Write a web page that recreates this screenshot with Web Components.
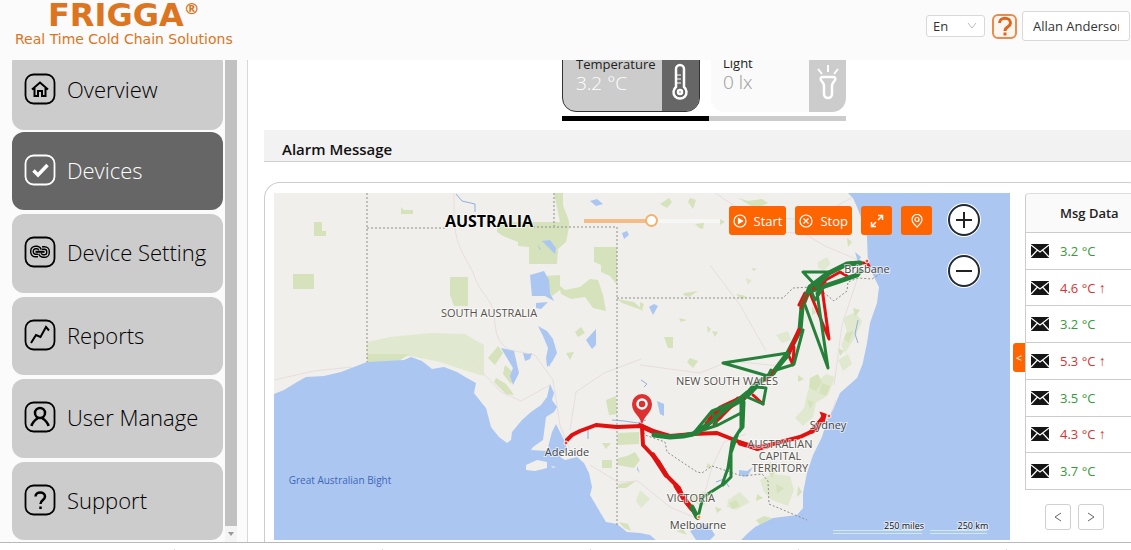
<!DOCTYPE html>
<html lang="en">
<head>
<meta charset="utf-8">
<title>Frigga - Devices</title>
<style>
  body {
    margin: 0;
    height: 100vh;
    overflow: hidden;
    font-family: "Open Sans", "Noto Sans", sans-serif;
    font-size: 13px;
    color: #222;
    background: #fff;
  }
</style>
</head>
<body>
<fr-app>
  <fr-header slot="header"></fr-header>
  <fr-sidebar slot="side">
    <fr-nav-item icon="home">Overview</fr-nav-item>
    <fr-nav-item icon="check" active>Devices</fr-nav-item>
    <fr-nav-item icon="link">Device Setting</fr-nav-item>
    <fr-nav-item icon="chart">Reports</fr-nav-item>
    <fr-nav-item icon="user">User Manage</fr-nav-item>
    <fr-nav-item icon="help">Support</fr-nav-item>
  </fr-sidebar>
  <fr-sensors>
    <fr-sensor icon="thermo" selected>Temperature<span slot="value">3.2 °C</span></fr-sensor>
    <fr-sensor icon="torch">Light<span slot="value">0 lx</span></fr-sensor>
  </fr-sensors>
  <fr-section-title>Alarm Message</fr-section-title>
  <fr-panel>
    <fr-map></fr-map>
    <fr-messages slot="list"></fr-messages>
  </fr-panel>
</fr-app>

<script>
const NAV_ICONS = {
  home: '<path d="M7 15.500 15 8.500l8 7M9.500 14v8h3.500v-5h4v5h3.500v-8" stroke-width="2"/>',
  check: '<path d="M8.500 15.500l4.500 4.500 9.500-10" stroke-width="3.500" stroke-linecap="butt"/>',
  link: '<path d="M13 18.500h-2.500a3.500 3.500 0 0 1-3.500-3.500v-1a3.500 3.500 0 0 1 3.500-3.500h1.500a3.500 3.500 0 0 1 3 2.500M17 11h2.500a3.500 3.500 0 0 1 3.500 3.500v1a3.500 3.500 0 0 1-3.500 3.500h-1.500a3.500 3.500 0 0 1-3-2.500" stroke-width="4"/><path class="in" d="M13 18.500h-2.500a3.500 3.500 0 0 1-3.500-3.500v-1a3.500 3.500 0 0 1 3.500-3.500h1.500a3.500 3.500 0 0 1 3 2.500M17 11h2.500a3.500 3.500 0 0 1 3.500 3.500v1a3.500 3.500 0 0 1-3.500 3.500h-1.500a3.500 3.500 0 0 1-3-2.500" stroke-width="1.200"/><path d="M10.500 14.800h9" stroke-width="2"/>',
  chart: '<path d="M6 23l5-8 4.500 2 5.500-10 3 3.500" stroke-width="2"/>',
  user: '<circle cx="15" cy="11" r="5" stroke-width="2.500"/><path d="M6.500 24c1-4.500 4.500-6.500 6.500-8M23.500 24c-1-4.500-4.500-6.500-6.500-8" stroke-width="2.500"/>',
  help: '<path d="M10.500 11.500c0-5.500 9.500-5.500 9.500 0 0 3.500-4.500 3.500-4.500 7.500M15.500 21.500v2.500" stroke-width="2.500" stroke-linecap="butt"/>'
};

const SENSOR_ICONS = {
  thermo: '<path d="M9 25V7a4 4 0 0 1 8 0v18a6.500 6.500 0 1 1-8 0z"/><circle cx="13" cy="30" r="2"/><path d="M10 13h4M10 17h4M10 21h4" stroke-width="1"/>',
  torch: '<path d="M8 14h12a2 2 0 0 1 1 3c-1 2-3 3-3 6v8a4 4 0 0 1-8 0v-8c0-3-2-4-3-6a2 2 0 0 1 1-3z"/><path d="M14 2v7M4 6l4 5M24 6l-4 5" stroke-width="2"/>'
};

class FrApp extends HTMLElement {
  constructor() {
    super();
    this.attachShadow({ mode: 'open' });
    this.shadowRoot.innerHTML = `
      <style>
        :host {
          display: flex;
          flex-direction: column;
          height: 100vh;
        }
        #body {
          flex: 1;
          min-height: 0;
          display: flex;
        }
        /* the page is scrolled a little, so main starts in the middle of the sensor cards */
        main {
          flex: 1;
          min-width: 0;
          overflow: hidden;
          padding-left: 16px;
          display: flex;
          flex-direction: column;
        }
        #inner {
          flex: 1;
          min-height: 0;
          margin-right: -13px;
          display: flex;
          flex-direction: column;
        }
        footer {
          height: 8px;
          box-sizing: border-box;
          border-top: 1px solid #b9b9bd;
          background: repeating-linear-gradient(90deg, transparent 0 174px, #d8d8d8 174px 175px, transparent 175px 208px) 0 6px no-repeat #fff;
        }
      </style>
      <slot name="header"></slot>
      <div id="body">
        <slot name="side"></slot>
        <main><div id="inner"><slot></slot></div></main>
      </div>
      <footer></footer>
    `;
  }
}

class FrHeader extends HTMLElement {
  constructor() {
    super();
    this.attachShadow({ mode: 'open' });
    this.shadowRoot.innerHTML = `
      <style>
        :host {
          display: flex;
          justify-content: space-between;
          align-items: flex-start;
          height: 60px;
          flex: none;
          overflow: hidden;
          background: #fbfbfb;
        }
        #logo {
          padding-left: 15px;
          color: #dd7420;
          text-align: center;
          text-decoration: none;
          font-family: "DejaVu Sans", sans-serif;
        }
        #logo strong {
          display: block;
          font-size: 32px;
          line-height: 30px;
        }
        #logo sup {
          font-size: 16px;
          line-height: 0;
        }
        #logo span {
          display: block;
          font-size: 14px;
          line-height: 18px;
        }
        form {
          display: flex;
          align-items: center;
          gap: 5px;
          padding: 11px 1px 0 0;
        }
        label {
          position: relative;
          display: flex;
        }
        select, input {
          box-sizing: border-box;
          font: inherit;
          color: #333;
          background: #fff;
          border: 1px solid #d9d9d9;
          border-radius: 3px;
        }
        select {
          appearance: none;
          width: 59px;
          height: 22px;
          padding: 0 6px;
        }
        label svg {
          position: absolute;
          right: 8px;
          top: 7px;
        }
        button {
          width: 25px;
          height: 25px;
          margin-left: 2px;
          padding: 0;
          border: 2px solid #ec8a4c;
          border-radius: 6px;
          background: #fdf6f0;
        }
        button svg { display: block; margin: auto; }
        input {
          width: 108px;
          height: 30px;
          padding: 0 10px;
        }
      </style>
      <a id="logo" href="#"><strong>FRIGGA<sup>®</sup></strong><span>Real Time Cold Chain Solutions</span></a>
      <form>
        <label>
          <select aria-label="Language"><option>En</option></select>
          <svg width="10" height="8" fill="none" stroke="#bbb"><path d="M1 1l4 5 4-5"/></svg>
        </label>
        <button type="button" aria-label="Help">
          <svg width="16" height="20" fill="none" stroke="#e0651c" stroke-width="3"><path d="M2.500 7c0-6.500 11-6.500 11 0 0 4-5.500 3.500-5.500 8M8 16.500v3"/></svg>
        </button>
        <input aria-label="User" value="Allan Anderson">
      </form>
    `;
  }
}

class FrSidebar extends HTMLElement {
  constructor() {
    super();
    this.attachShadow({ mode: 'open' });
    this.shadowRoot.innerHTML = `
      <style>
        :host {
          box-sizing: border-box;
          flex: none;
          width: 248px;
          display: flex;
          overflow: hidden;
          padding: 0 10px 0 12px;
          gap: 2px;
          background: #fbfbfb;
          border-right: 1px solid #d8d8d8;
        }
        nav {
          flex: 1;
          display: flex;
          flex-direction: column;
          gap: 4px;
          padding-bottom: 2px;
        }
        ::slotted(:first-child) { margin: -9px 0 -2px; }
        #bar {
          width: 12px;
          display: flex;
          flex-direction: column;
          background: #f4f4f4;
        }
        #thumb { flex: 1; background: #c1c1c1; }
        svg { display: block; margin: 5px auto; }
      </style>
      <nav><slot></slot></nav>
      <div id="bar">
        <div id="thumb"></div>
        <svg width="8" height="6" fill="#999"><path d="M1 1h6L4 5z"/></svg>
      </div>
    `;
  }
}

class FrNavItem extends HTMLElement {
  constructor() {
    super();
    this.attachShadow({ mode: 'open' });
    this.shadowRoot.innerHTML = `
      <style>
        :host {
          --ink: #000;
          --card: #ccc;
          flex: 1;
          display: flex;
        }
        :host([active]) {
          --ink: #fff;
          --card: #666;
        }
        a {
          flex: 1;
          display: flex;
          align-items: center;
          gap: 11px;
          padding: 0 0 2px 12px;
          border-radius: 12px;
          background: var(--card);
          color: var(--ink);
          text-decoration: none;
          font-size: 22px;
          font-weight: 300;
          line-height: 30px;
          white-space: nowrap;
        }
        svg { flex: none; stroke: var(--ink); fill: none; }
        .in { stroke: var(--card); }
      </style>
      <a href="#">
        <svg width="32" height="32" viewBox="-1 -1 32 32">
          <rect width="29" height="29" x=".5" y=".5" rx="8" stroke-width="1.800"/>${NAV_ICONS[this.getAttribute('icon')]}
        </svg>
        <slot></slot>
      </a>
    `;
  }
}

class FrSensors extends HTMLElement {
  constructor() {
    super();
    this.attachShadow({ mode: 'open' });
    this.shadowRoot.innerHTML = `
      <style>
        :host {
          flex: none;
          align-self: center;
          margin: -28px 0 9px;
          width: 284px;
        }
        #cards { display: flex; gap: 11px; }
        #bar {
          height: 5px;
          margin-top: 4px;
          background: linear-gradient(90deg, #000 147px, #ccc 147px);
        }
      </style>
      <div id="cards"><slot></slot></div>
      <div id="bar"></div>
    `;
  }
}

class FrSensor extends HTMLElement {
  constructor() {
    super();
    this.attachShadow({ mode: 'open' });
    this.shadowRoot.innerHTML = `
      <style>
        :host {
          box-sizing: border-box;
          width: 135px;
          height: 80px;
          display: flex;
          overflow: hidden;
          border-radius: 14px;
          background: #fafafa;
          --side: #ccc;
        }
        :host([selected]) {
          width: 138px;
          border: 1px solid #333;
          background: #ccc;
          --side: #666;
        }
        #text {
          flex: 1;
          display: flex;
          flex-direction: column;
          padding: 22px 0 0 12px;
          line-height: 18px;
        }
        ::slotted(span) {
          display: block;
          font-size: 19px;
          line-height: 20px;
          font-weight: 300;
          color: #999;
        }
        :host([selected]) ::slotted(span) { color: #fff; }
        #icon {
          width: 37px;
          display: flex;
          justify-content: center;
          align-items: flex-end;
          padding-bottom: 9px;
          box-sizing: border-box;
          background: var(--side);
        }
        :host([selected]) #text { padding-left: 13px; }
      </style>
      <div id="text"><div><slot></slot></div><slot name="value"></slot></div>
      <div id="icon">
        <svg width="28" height="40" viewBox="0 0 28 40" fill="none" stroke="#fff" stroke-width="2.500">${SENSOR_ICONS[this.getAttribute('icon')]}</svg>
      </div>
    `;
  }
}

class FrSectionTitle extends HTMLElement {
  constructor() {
    super();
    this.attachShadow({ mode: 'open' });
    this.shadowRoot.innerHTML = `
      <style>
        :host {
          display: block;
          flex: none;
          background: #f2f2f2;
          border-bottom: 1px solid #d0d0d0;
        }
        h2 {
          margin: 0;
          padding: 7px 18px 0;
          font-size: 15px;
          line-height: 24px;
          font-weight: 600;
          color: #111;
        }
      </style>
      <h2><slot></slot></h2>
    `;
  }
}

class FrPanel extends HTMLElement {
  constructor() {
    super();
    this.attachShadow({ mode: 'open' });
    this.shadowRoot.innerHTML = `
      <style>
        :host {
          flex: 1;
          min-height: 0;
          display: flex;
          margin-top: 20px;
          padding: 10px 0 2px 9px;
          border: 1px solid #ccc;
          border-bottom: 0;
          border-radius: 16px 16px 0 0;
        }
        button {
          flex: none;
          width: 12px;
          height: 29px;
          margin: 150px 0 0 3px;
          padding: 0;
          border: 0;
          border-radius: 3px 0 0 3px;
          background: #fe6500;
          color: #fff;
          font: 11px "Open Sans", sans-serif;
        }
      </style>
      <slot></slot>
      <button aria-label="Toggle list">&lt;</button>
      <slot name="list"></slot>
    `;
  }
}

class FrMessages extends HTMLElement {
  constructor() {
    super();
    this.attachShadow({ mode: 'open' });
    const rows = [['3.2'], ['4.6', '↑'], ['3.2'], ['5.3', '↑'], ['3.5'], ['4.3', '↑'], ['3.7']];
    this.shadowRoot.innerHTML = `
      <style>
        :host { flex: none; width: 118px; }
        table {
          width: 100%;
          height: 297px;
          border-collapse: separate;
          border-spacing: 0;
          border-left: 1px solid #ccc;
          border-radius: 4px 0 0 0;
        }
        th, td {
          padding: 0;
          text-align: left;
          border-bottom: 1px solid #ccc;
        }
        th {
          height: 38px;
          background: #fafafa;
          border-top: 1px solid #ddd;
          font-weight: 600;
        }
        th:first-child { width: 34px; border-top-left-radius: 4px; }
        td { color: #359a3a; }
        td.high { color: #d63230; }
        td span { font: 14px/14px "Liberation Sans", sans-serif; }
        td svg { display: block; margin-left: 5px; }
        nav {
          display: flex;
          gap: 7px;
          padding: 14px 0 0 20px;
        }
        nav button {
          width: 26px;
          height: 26px;
          padding: 0;
          border: 1px solid #d0d0d0;
          border-radius: 3px;
          background: #fff;
        }
        nav svg { display: block; margin: auto; }
      </style>
      <table>
        <tr><th></th><th>Msg Data</th></tr>
        ${rows.map(([temp, arrow]) => `<tr>
          <td><svg width="18" height="14"><path fill="#151515" d="M0 0h18v14H0z"/><path fill="none" stroke="#fff" stroke-width="1.200" d="M0 1l9 7 9-7M0 13l6.500-7M18 13l-6.500-7"/></svg></td>
          ${arrow ? `<td class="high">${temp} °C <span>${arrow}</span></td>` : `<td>${temp} °C</td>`}
        </tr>`).join('')}
      </table>
      <nav>
        <button aria-label="Previous"><svg width="10" height="10" fill="none" stroke="#666"><path d="M8 1L2 5l6 4"/></svg></button>
        <button aria-label="Next"><svg width="10" height="10" fill="none" stroke="#666"><path d="M2 1l6 4-6 4"/></svg></button>
      </nav>
    `;
  }
}

class FrMap extends HTMLElement {
  constructor() {
    super();
    this.attachShadow({ mode: 'open' });
    this.shadowRoot.innerHTML = `
      <style>
        :host {
          flex: 1;
          min-width: 0;
          position: relative;
          overflow: hidden;
          background: #f0efeb;
        }
        #map {
          position: absolute;
          inset: 0;
          width: 100%;
          height: 100%;
        }
        .sea { fill: #abc6f1; }
        .park { fill: #d5e2bb; }
        .pale { fill: #e0e9cf; }
        .road { fill: none; stroke: #e8dddf; }
        .edge { fill: none; stroke: #8d8d88; stroke-dasharray: 2 2; }
        .red, .green { fill: none; stroke-width: 3; stroke-linejoin: round; stroke-linecap: round; }
        .red { stroke: #df1212; }
        .green { stroke: #25803a; }
        .fat { stroke-width: 5; }
        .mid { stroke-width: 4; }
        .mix { stroke: #a33a1c; }
        text {
          font-size: 11px;
          text-anchor: middle;
          fill: #55504d;
          stroke: rgba(255, 255, 255, 0.6);
          stroke-width: 2px;
          paint-order: stroke;
        }
        .city { fill: #444; }
        .water { font-size: 10px; fill: #3f67b8; stroke: none; }
        .scale { font-size: 9px; fill: #111; }
        .country { font-size: 16px; font-weight: 700; fill: #000; }
        #tools, #zoom {
          position: absolute;
          display: flex;
        }
        #tools {
          top: 13px;
          right: 78px;
          gap: 9px;
          align-items: center;
        }
        #tools button {
          height: 29px;
          padding: 0 4px;
          min-width: 31px;
          display: flex;
          align-items: center;
          justify-content: center;
          gap: 7px;
          border: 0;
          border-radius: 3px;
          background: #fe6500;
          color: #fff;
          font: 13px "Open Sans", sans-serif;
        }
        #tools svg { fill: none; stroke: #fff; stroke-width: 1.200; }
        input {
          appearance: none;
          width: 136px;
          height: 4px;
          margin: 0;
          background: linear-gradient(90deg, #f5bd85 50%, #f6f6f4 50%);
        }
        input::-webkit-slider-thumb {
          appearance: none;
          box-sizing: border-box;
          width: 13px;
          height: 13px;
          border: 2px solid #f5b06c;
          border-radius: 50%;
          background: #fff;
        }
        #zoom {
          top: 11px;
          right: 30px;
          flex-direction: column;
          gap: 19px;
        }
        #zoom button {
          width: 32px;
          height: 32px;
          padding: 0;
          border: 2px solid #222b33;
          border-radius: 50%;
          background: #fff;
          box-shadow: 0 0 0 1px #fff;
        }
        #zoom svg { display: block; margin: auto; stroke: #222; stroke-width: 2; }
      </style>
      <svg id="map" viewBox="274 193 736 347" preserveAspectRatio="xMidYMid slice">
        <!-- parks -->
        <path class="pale" d="M367 342L390 337 430 333 465 334 475 340 484 345V376L470 372 440 362 410 356 367 361z"/>
        <path class="park" d="M367 354h42l-10 7-32 2zM293 274h21v15h-21zM314 222h8v9h4v5h-12zM401 207l3 3h9v4h-12zM450 277h18v29h-14l-4-11zM554 193h9v12c3 10 7 14 6 22l-3 15-8 7-1 15h-28v-17l-11-1v-4l-15-6-6-4v-9l23-1h40zM594 247h23v38l-7-9-9-4v-7l-7-3zM559 285l6 5 15-3 10-8 8 1 5 15 3 16-13-3-8-11-14 2-10-5zM545 276l15-1v15l-8 6-6-10zM488 358l10-12 5 7-8 12zM505 365l10 9-4 10-8-10zM496 378l10 6 8 11-8-1-12-12zM575 332l6-5 4 6-7 4zM566 353l8-1-4 8zM606 400l10-4 1 18-8 1zM618 433l21-1v12l-22 1zM618 458l9-2 8-4 5 8-6 8-17-3zM602 443h9l-5 6zM602 460h10v8h-10zM619 484l17-3-10 7h-9zM617 299l17 3 10 9-8-3-14-5z"/>
        <path class="park" d="M660 204l9-6 3 4-5 6zM690 198l6 2-3 9-5-7zM738 198l10 3 14-2 6 4-8 4 6 6-9-3-9-6zM695 224l9-1-1 6-4-1zM684 293l14-2-9 6-6-2zM736 294l10 2-4 4zM679 318l8 2-6 2zM664 337h9v11h-5zM707 326l4 3-3 4zM712 331l6 1-3 5zM690 358l8 3-5 7-6-6zM640 302l4 2-2 6-2-3zM720 219l5 3-5 3zM770 231l6-3 8 4-9 3zM752 268l5 1-4 2z"/>
        <path class="pale" d="M818 262l9-5 4 7-7 6-6-2zM776 335l12-4 3 9-9 3zM745 278l7 2-4 5zM808 390l18-16 9 3-7 18-12 8-3 14-10 9-8-8 9-10zM843 318l12-6 7 9-6 15-11 17-4-8 6-13zM838 360l10-6 4 10-9 7zM760 480l12-6 18 2 4 14-6 16-16-6-8-8zM690 497l14-6 9 8-12 8zM728 500l12-8 10 10-14 8-9-3zM640 490l10 9-9 9-5-7z"/>
        <path class="park" d="M810 378l8-4 4 8-6 9-7-3zM822 383l8 3-4 10-7-3zM807 400l7 2-4 7zM846 333l7-2-4 12-5-4zM853 308l7 2-5 7zM838 348l6 3-4 5zM770 462l6 8-4 8-5-9zM776 484l8 4-7 6zM798 486l4 6-5 5zM729 503l7-3 4 6-8 3zM757 494l6 4-7 3zM715 507l7 2-5 4zM847 238l5 4-4 5zM839 225l6 5-5 3zM798 375l6 4-6 3zM812 306l4 7-4 2zM708 463l4 4-6 1zM676 531l7-2 4 6zM756 520l8-4 8 2-12 7zM619 522l9 2 3 7-7-3z"/>
        <!-- roads -->
        <path class="road" d="M274 380l40-9 38-4M454 193v25c1 30 14 42 20 57 6 20 18 22 20 40 2 16 1 26 16 35l25 5 18 25 7 45 10 25M471 360l30 32 20 9 29-16M570 430l6-38 28-19 37-14M590 465l28 17 20-1 32 26 28 12M640 365l60 8 30-12 60 6M745 228l60 6 20 12 43 18M715 193l35 23 60 4 45-24M698 517l14-50 12-25 22-8M836 400l-5 14-14 16-50 18M862 265l-20 60-8 60M710 265l30 40 26 46"/>
        <!-- sea -->
        <path class="sea" d="M274 394L284 390 297 382 306 377 324 376 341 372 354 367 367 362 404 360 411 357 422 361 432 369 444 367 457 372 467 378 476 383 474 393 481 402 486 408 491 427 499 437 507 443 511 440 512 432 522 420 531 412 541 405 547 397 550 384 554 393 552 400 557 407 554 412 546 417 543 440 533 447 531 450 547 451 552 432 556 424 564 440 567 448 560 457 565 460 577 457 584 463 589 473 592 487 590 495 597 507 606 522 617 524 627 532 640 533 650 535 657 541H274z"/>
        <path class="sea" d="M740 541L747 534 755 527 773 518 797 515 803 508V493L807 473 813 455 822 437 827 420 833 410 840 393 857 378 863 363 862 367 867 343 870 323 877 303 879 287 873 275 868 265 867 237 862 220 857 207 853 198 847 192H1011V541zM690 531l9-4 3-5 8 5 5 8-5 5h-14z"/>
        <path d="M526 465l11-5 10 2 0 6-12 3-9-1zM551 466l5 1-3 1z" fill="#f0efeb"/>
        <path class="sea" d="M530 275L544 271 549 280 550 293 554 301 545 296 532 296 531 286zM536 303l12-1-7 7-5-1zM538 326l9 5 6 8 4 14-5 9-5 5-1-9 2-10-5-12zM501 348l13 3 5 22-6 12-3-9 3-8zM586 340l10-11v16l-4 4zM523 353l6 1 3-1-2 6-5 2zM622 233l5-2 2 4-5 4zM590 201l7-2 6 5-7 2zM649 307l5-3 4 2-5 9zM657 401l7 3v12l-4-2zM542 241l8-1 6 8-1 6-7-7zM538 244l3 6-2-1zM548 360l4 1-3 6zM855 252l6 5-3 5zM739 470l8 1 6-4-6 10-8-2zM637 466l3 7-3-3z"/>
        <path d="M456 194l6 7 13 3 0 8M641 380l6 4-3 3M612 420l12 1 14 2 8-3M588 427v12M858 320l-3 14 3 9M716 482l8-3 5 8" fill="none" stroke="#93aee0"/>
        <!-- state borders -->
        <path class="edge" d="M367 193v169M367 228h78M533 227h84M554 193v33M617 227v298M617 298h166l10-10 20-1 10 5 11 9 13-10 1-9 10-4 14 1 8-5M640 425l5 10 20 7 2 10 30 20 5 1 10-7 30 10 20-2 6 7 1 23 38 16"/>
        <!-- shipment tracks -->
        <path class="red mid" d="M567 440L572 435 580 431 596 425 617 427 642 426M642 427l1 18 15 16 9 15 12 12 4 9 9 12 6 9"/>
        <path class="red fat" d="M676 486l8 13 8 10M653 455l13 20"/>
        <path class="red mid" d="M640 425L653 431 670 436 693 434 717 433 737 441 757 449 773 444 800 437 815 430 823 417"/>
        <path class="red fat" d="M643 427l11 5M740 443l17 5 10-2M812 431l9-10"/>
        <path class="red" d="M810 293l19 46-7-51M788 354l5 11 1-18M815 286l25-14 7 4M850 263l17 0 2 3M753 395l10 9M712 420l26-22M704 427l18-21 30-14M720 418l12-15M799 305l6-12"/>
        <path class="green fat" d="M654 435l16 2 13-1 10-2 14-9 18-16 18-10 12-14 18-12M692 507l5 10"/>
        <path class="green fat" d="M773 373L788 353 800 330 802 307 810 287 827 274 847 264 860 263M813 290L840 281 857 275 860 271"/>
        <path class="red mix" d="M801 308l6-13M811 290l9-5M766 380l7-9M706 423l14-15M714 424l18-18M730 404l14-5"/>
        <path class="red mid" d="M789 353l10-23"/>
        <path class="red" d="M709 419l11-12M718 419l14-14M817 286l8-4"/>
        <path class="green" d="M788 353l-65 10 45 13 3-6M788 356l-12 14 16-5M803 272l28 0-14 15zM805 305l23 63-11-75 6-5M757 387l9 1-3 16-16-7 10-10M693 434l19-23 31-12-2 14-23 12-18 6M697 434l50-42M712 411l4 12M741 400v28l-9 14-4 26-6 17-19 12-5 20M744 402l-1 25-5 6-7 20 0 24-8 8M810 288l5 12 6-9M803 330l-9 34"/>
        <path d="M642 425c-2-10-10-12-10-21a10 10 0 0 1 20 0c0 9-8 11-10 21z" fill="#dd3030"/>
        <circle cx="642" cy="404" r="4.500" fill="#dd3030" stroke="#fff" stroke-width="2.500"/>
        <g fill="#e4482c" stroke="#fff"><circle cx="566" cy="443" r="2"/><circle cx="867" cy="261" r="2"/><circle cx="829" cy="416" r="2"/><circle cx="699" cy="517" r="2" fill="#e78a2c"/></g>
        <path d="M822 414l3 1-1 4z" fill="#df1212" stroke="#df1212" stroke-width="3"/>
        <text class="country" x="489" y="227">AUSTRALIA</text>
        <text x="489" y="317">SOUTH AUSTRALIA</text>
        <text x="727" y="385">NEW SOUTH WALES</text>
        <text x="780" y="448">AUSTRALIAN</text>
        <text x="780" y="460">CAPITAL</text>
        <text x="780" y="472">TERRITORY</text>
        <text x="691" y="502">VICTORIA</text>
        <text class="city" x="867" y="273">Brisbane</text>
        <text class="city" x="828" y="429">Sydney</text>
        <text class="city" x="567" y="456">Adelaide</text>
        <text class="city" x="698" y="529">Melbourne</text>
        <text class="water" x="340" y="484">Great Australian Bight</text>
        <text class="scale" x="904" y="529">250 miles</text>
        <text class="scale" x="973" y="529">250 km</text>
        <path d="M833 532h89M930 532h57" stroke="#fff" stroke-width="3"/>
        <path d="M833 532h89M930 532h57" stroke="#4f9bc4"/>
      </svg>
      <div id="tools">
        <input type="range" aria-label="Playback" value="50">
        <button><svg width="14" height="14"><circle cx="7" cy="7" r="6"/><path d="M5.500 4.500v5l4-2.500z" fill="#fff"/></svg>Start</button>
        <button><svg width="14" height="14"><circle cx="7" cy="7" r="6"/><path d="M4.500 4.500l5 5M9.500 4.500l-5 5"/></svg>Stop</button>
        <button aria-label="Full screen"><svg width="14" height="14" style="stroke-width: 1.500"><path d="M8 1.500h4.500V6M12 2L8 6M1.500 8v4.500H6M2 12l4-4"/></svg></button>
        <button aria-label="Locate"><svg width="14" height="14"><path d="M7 13C4 10 2 8.500 2 5.500a5 5 0 0 1 10 0C12 8.500 10 10 7 13z"/><circle cx="7" cy="5.500" r="2"/></svg></button>
      </div>
      <div id="zoom">
        <button aria-label="Zoom in"><svg width="16" height="16"><path d="M0 8h16M8 0v16"/></svg></button>
        <button aria-label="Zoom out"><svg width="16" height="16"><path d="M0 8h16"/></svg></button>
      </div>
    `;
  }
}

customElements.define('fr-app', FrApp);
customElements.define('fr-header', FrHeader);
customElements.define('fr-sidebar', FrSidebar);
customElements.define('fr-nav-item', FrNavItem);
customElements.define('fr-sensors', FrSensors);
customElements.define('fr-sensor', FrSensor);
customElements.define('fr-section-title', FrSectionTitle);
customElements.define('fr-panel', FrPanel);
customElements.define('fr-messages', FrMessages);
customElements.define('fr-map', FrMap);
</script>
</body>
</html>
